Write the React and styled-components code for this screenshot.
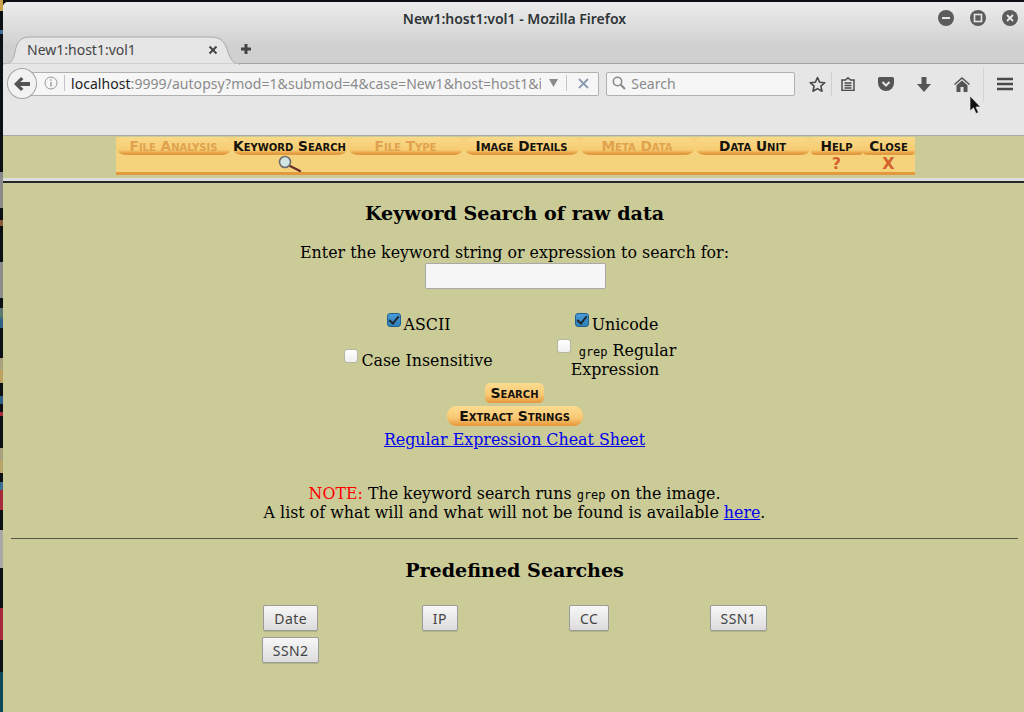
import React from "react"
import styled, { createGlobalStyle } from 'styled-components'

const GlobalStyle = createGlobalStyle`
  html, body {
    margin: 0;
    padding: 0;
    height: 712px;
    overflow: hidden;
    background: #0c0f14;
  }
`

const uiFont = `"Noto Sans", "Open Sans", sans-serif`
const pageFont = `"DejaVu Serif", "Liberation Serif", serif`
const capsFont = `"DejaVu Sans", "Liberation Sans", sans-serif`

const Screen = styled('div')`
  position: relative;
  width: 1024px;
  height: 712px;
  overflow: hidden;
  display: flex;
  background: #0c0f14;
`

// bits of the desktop that peek out left of the window
const DesktopStrip = styled('div')`
  flex: none;
  width: 3px;
  height: 712px;
  background: linear-gradient(to bottom,
    #c9a24a 0 11px, #0c0f14 11px 30px, #3d6f95 30px 34px, #0c0f14 34px 172px,
    #8a8a8a 172px 208px, #0c0f14 208px 220px, #8a5a3a 220px 226px, #0c0f14 226px 262px,
    #8c8c8c 262px 298px, #0c0f14 298px 308px, #5a7a70 308px 316px, #2f5f85 320px 328px,
    #0c0f14 328px 358px, #a9a27e 358px 370px, #bda262 370px 383px, #0c0f14 383px 396px, #2f5f85 396px 404px,
    #0c0f14 404px 412px, #a52a3a 412px 416px, #0c0f14 416px 448px, #a9a27e 448px 460px, #b8a468 460px 473px,
    #0c0f14 473px 482px, #3d6f95 482px 490px, #a52a3a 490px 510px, #0c0f14 510px 530px,
    #a8a8a8 530px 568px, #0c0f14 568px 608px, #a52a3a 608px 640px, #0c0f14 640px 672px,
    #0e4a5a 672px 712px);
`

const Window = styled('div')`
  flex: none;
  width: 1023px;
  margin-top: 2px;
  height: 710px;
  display: flex;
  flex-direction: column;
  background: #cbcb98;
  border-top-left-radius: 5px;
  overflow: hidden;
`

const TitleBar = styled('div')`
  flex: none;
  background: linear-gradient(to bottom, #ececec, #d0d0d0 45px);
  border-bottom: 1px solid #a3a3a3;
`

const TitleRow = styled('div')`
  height: 33px;
  box-sizing: border-box;
  display: grid;
  grid-template-columns: 1fr auto 1fr;
  align-items: center;
  padding: 0 8px 1px;
`

const WindowTitle = styled('div')`
  grid-column: 2;
  font: 600 14px ${uiFont};
  color: #2e3436;
`

const WindowControls = styled('div')`
  grid-column: 3;
  justify-self: end;
  display: flex;
  gap: 16px;
`

const TabRow = styled('div')`
  height: 28px;
  display: flex;
  align-items: center;
`

const Tab = styled('div')`
  position: relative;
  width: 237px;
  height: 28px;
  box-sizing: border-box;
  padding: 0 22px 0 24px;
  margin-bottom: -1px;
  display: flex;
  align-items: center;
  justify-content: space-between;
  font: 14px ${uiFont};
  color: #444;
  z-index: 0;
`

const TabShape = styled('svg')`
  position: absolute;
  left: 0;
  top: 0;
  z-index: -1;
`

const NewTab = styled('svg')`
  margin-left: 1px;
`

const NavBar = styled('div')`
  flex: none;
  height: 72px;
  box-sizing: border-box;
  background: #e6e6e6;
  border-bottom: 1px solid #a9a9a9;
  padding: 8px 0 0 4px;
  display: flex;
  align-items: flex-start;
`

const BackButton = styled('div')`
  position: relative;
  z-index: 1;
  flex: none;
  width: 30px;
  height: 31px;
  margin-top: -4px;
  box-sizing: border-box;
  border: 1px solid #a5a5a5;
  border-radius: 50%;
  background: #f2f2f2;
  display: flex;
  align-items: center;
  justify-content: center;
`

const UrlBar = styled('div')`
  width: 570px;
  height: 24px;
  margin-left: -7px;
  box-sizing: border-box;
  border: 1px solid #b0b0b0;
  border-left: none;
  border-radius: 0 2px 2px 0;
  background: #f6f6f6;
  padding: 0 0 2px 14px;
  display: flex;
  align-items: center;
  font: 14px ${uiFont};
`

const InfoSep = styled('span')`
  flex: none;
  width: 1px;
  height: 16px;
  margin: 0 6px;
  background: #c4c4c4;
`

const UrlText = styled('div')`
  flex: none;
  width: 470px;
  overflow: hidden;
  white-space: nowrap;
  letter-spacing: 0.05px;
  color: #8b8b8b;
  b {
    font-weight: normal;
    color: #222;
  }
`

const UrlArrow = styled('svg')`
  flex: none;
  margin-left: 8px;
`

const UrlSep = styled('span')`
  flex: none;
  width: 1px;
  height: 16px;
  margin: 0 11px 0 8px;
  background: #c4c4c4;
`

const SearchBox = styled('div')`
  width: 189px;
  height: 24px;
  margin-left: 7px;
  box-sizing: border-box;
  border: 1px solid #b0b0b0;
  border-radius: 2px;
  background: #f6f6f6;
  padding: 0 0 2px 5px;
  display: flex;
  align-items: center;
  gap: 5px;
  font: 14px ${uiFont};
  color: #8b8b8b;
`

const ToolSlot = styled('div')`
  flex: none;
  width: ${p => p.$w}px;
  height: 24px;
  margin-left: ${p => p.$ml || 0}px;
  margin-right: ${p => p.$mr || 0}px;
  box-sizing: border-box;
  display: flex;
  align-items: center;
  justify-content: center;
  border-right: ${p => (p.$divided ? '1px solid #cfcfcf' : 'none')};
`

const ToolDivider = styled('div')`
  flex: none;
  width: 1px;
  height: 34px;
  margin: -4px 0 0 2px;
  background: #d4d4d4;
`

const Cursor = styled('svg')`
  position: absolute;
  left: 969px;
  top: 95px;
`

const Frame = styled('div')`
  flex: none;
  height: 40px;
  padding: 1px 0 0 1px;
  display: flex;
  justify-content: center;
`

const MenuBar = styled('div')`
  display: flex;
  height: 38px;
`

const MenuCell = styled('div')`
  width: ${p => p.$w}px;
  height: 38px;
  box-sizing: border-box;
  background: #f5d37d;
  border-bottom: 3px solid #e39a3e;
  display: flex;
  flex-direction: column;
  align-items: center;
`

const MenuPill = styled('div')`
  flex: none;
  width: 100%;
  height: 18px;
  box-sizing: border-box;
  border-radius: ${p => (p.$square ? '4px' : '9px')};
  background: linear-gradient(to bottom, #f9d989, #f7cc72 72%, #e39a3e 92%);
  display: flex;
  align-items: center;
  justify-content: center;
  font: bold 13.7px ${capsFont};
  font-variant: small-caps;
  color: ${p => (p.$off ? '#e0a24e' : '#16120c')};
  white-space: nowrap;
`

const MenuMark = styled('div')`
  flex: 1;
  display: flex;
  align-items: center;
  justify-content: center;
  font: bold 16px ${capsFont};
  line-height: 1;
  color: #d4622c;
`

const FrameRule = styled('div')`
  flex: none;
  height: 6px;
  box-sizing: border-box;
  background: #dcdcdc;
  border-bottom: 2px solid #23262a;
  border-top: 1px solid #cbcb98;
`

const Page = styled('div')`
  flex: 1;
  padding: 0 8px;
  text-align: center;
  font: 15.85px/19px ${pageFont};
  color: #000;
`

const Heading = styled('h3')`
  margin: ${p => p.$top}px 0 ${p => p.$bottom}px;
  font: bold 19.1px/22px ${pageFont};
`

const KeywordInput = styled('input')`
  display: block;
  width: 181px;
  height: 26px;
  box-sizing: border-box;
  margin: 1px auto 0;
  position: relative;
  left: 1px;
  border: 1px solid #a9a9a9;
  border-radius: 2px;
  background: #f6f6f6;
`

const OptionGrid = styled('div')`
  width: 396px;
  margin: 24px auto 0;
  padding-left: 5px;
  display: grid;
  grid-template-columns: 196px 200px;
  justify-items: center;
  align-items: center;
  row-gap: 5px;
`

const Option = styled('label')`
  display: block;
  width: ${p => (p.$narrow ? '135px' : 'auto')};
`

const Tick = styled('input')`
  appearance: none;
  position: relative;
  width: 14px;
  height: 14px;
  margin: 0 3px;
  box-sizing: border-box;
  border: 1px solid #b5b5a5;
  border-radius: 3px;
  background: linear-gradient(to bottom, #fff, #efefef);
  vertical-align: 3px;

  &:checked {
    border-color: #20608f;
    background: linear-gradient(to bottom, #4a9bd8, #2f7fb8);
  }

  &:checked::after {
    content: '';
    position: absolute;
    left: 3.5px;
    top: 0;
    width: 4px;
    height: 8px;
    border: solid #1d2a33;
    border-width: 0 2px 2px 0;
    transform: rotate(40deg);
  }
`

const Code = styled('code')`
  font: 12px "DejaVu Sans Mono", "Liberation Mono", monospace;
`

const ImageButton = styled('div')`
  width: ${p => p.$w}px;
  height: 20px;
  margin: ${p => p.$top}px auto 0;
  border-radius: ${p => p.$r}px;
  background: linear-gradient(to bottom, #fbdc8f, #f9c873 60%, #e5963a);
  display: flex;
  align-items: center;
  justify-content: center;
  font: bold 14px ${capsFont};
  font-variant: small-caps;
  color: #16120c;
`

const CheatLink = styled('a')`
  display: block;
  margin-top: 4px;
  color: #0000ee;
  text-decoration: underline;
`

const Note = styled('p')`
  margin: 35px 0 0;
  a {
    color: #0000ee;
  }
`

const NoteLabel = styled('span')`
  color: #ff0000;
`

const Rule = styled('hr')`
  margin: 16px 0 0;
  border: none;
  border-top: 1px solid #55554a;
`

const SearchGrid = styled('div')`
  width: 597px;
  margin: 0 auto;
  display: grid;
  grid-template-columns: repeat(4, 149.25px);
  justify-items: center;
  row-gap: 6px;
`

const PresetButton = styled('button')`
  height: 26px;
  padding: 0 10px;
  border: 1px solid #9b9b9b;
  border-radius: 2px;
  background: linear-gradient(to bottom, #f7f7f7, #dcdcdc);
  box-shadow: 0 1px 0 rgba(0, 0, 0, 0.12);
  font: 14px ${uiFont};
  letter-spacing: 0.4px;
  color: #444;
`

const CircleIcon = ({ children }) => (
  <svg width="16" height="16" viewBox="0 0 16 16">
    <circle cx="8" cy="8" r="8" fill="#5c5c5c" />
    {children}
  </svg>
)

const Magnifier = () => (
  <svg width="26" height="18" viewBox="0 0 26 18">
    <path d="M11 10 L23 16" stroke="#6b2f2a" strokeWidth="2.4" strokeLinecap="round" />
    <circle cx="8" cy="7" r="5.5" fill="#cfe6e2" stroke="#6d6d6d" strokeWidth="1.6" />
  </svg>
)

const menuItems = [
  { label: 'File Analysis', w: 116, off: true },
  { label: 'Keyword Search', w: 116, mark: <Magnifier /> },
  { label: 'File Type', w: 116, off: true },
  { label: 'Image Details', w: 116 },
  { label: 'Meta Data', w: 115, off: true },
  { label: 'Data Unit', w: 116 },
  { label: 'Help', w: 52, square: true, mark: '?' },
  { label: 'Close', w: 52, square: true, mark: 'X' },
]

const presets = ['Date', 'IP', 'CC', 'SSN1', 'SSN2']

function App() {
  return (
    <Screen>
      <GlobalStyle />
      <DesktopStrip />
      <Window>
        <TitleBar>
          <TitleRow>
            <WindowTitle>New1:host1:vol1 - Mozilla Firefox</WindowTitle>
            <WindowControls>
              <CircleIcon><rect x="4" y="7" width="8" height="2" fill="#e8e8e8" /></CircleIcon>
              <CircleIcon><rect x="4.5" y="4.5" width="7" height="7" fill="none" stroke="#e8e8e8" strokeWidth="1.6" /></CircleIcon>
              <CircleIcon><path d="M5 5 L11 11 M11 5 L5 11" stroke="#e8e8e8" strokeWidth="1.8" /></CircleIcon>
            </WindowControls>
          </TitleRow>
          <TabRow>
            <Tab>
              <TabShape width="237" height="29" viewBox="0 0 237 29">
                <path d="M0 28 C8 28 10 25 12 16 C14 5 18 1 27 1 H208 C218 1 222 6 225 16 C228 25 231 28 237 28 Z" fill="#e6e6e6" stroke="#a8a8a8" />
                <path d="M1 28.5 H236" stroke="#e6e6e6" strokeWidth="1.5" />
              </TabShape>
              <span>New1:host1:vol1</span>
              <svg width="10" height="10" viewBox="0 0 10 10">
                <path d="M1.5 1.5 L8.5 8.5 M8.5 1.5 L1.5 8.5" stroke="#444" strokeWidth="2" />
              </svg>
            </Tab>
            <NewTab width="10" height="10" viewBox="0 0 10 10">
              <path d="M3.5 0 H6.5 V3.5 H10 V6.5 H6.5 V10 H3.5 V6.5 H0 V3.5 H3.5 Z" fill="#444" />
            </NewTab>
          </TabRow>
        </TitleBar>
        <NavBar>
          <BackButton>
            <svg width="16" height="14" viewBox="0 0 16 14">
              <path d="M7 0 L9.5 2.2 L6.2 5 H16 V9 H6.2 L9.5 11.8 L7 14 L0 7 Z" fill="#555" />
            </svg>
          </BackButton>
          <UrlBar>
            <svg width="14" height="14" viewBox="0 0 14 14">
              <circle cx="7" cy="7" r="6" fill="none" stroke="#999" />
              <path d="M7 6 V10.5 M7 3.2 V4.8" stroke="#999" strokeWidth="1.4" />
            </svg>
            <InfoSep />
            <UrlText><b>localhost</b>:9999/autopsy?mod=1&amp;submod=4&amp;case=New1&amp;host=host1&amp;i</UrlText>
            <UrlArrow width="9" height="8" viewBox="0 0 9 8"><path d="M0 0 H9 L4.5 8 Z" fill="#8a8a8a" /></UrlArrow>
            <UrlSep />
            <svg width="11" height="11" viewBox="0 0 11 11">
              <path d="M1 1 L10 10 M10 1 L1 10" stroke="#8a9bb0" strokeWidth="1.8" />
            </svg>
          </UrlBar>
          <SearchBox>
            <svg width="14" height="14" viewBox="0 0 14 14">
              <circle cx="5.5" cy="5.5" r="4.2" fill="none" stroke="#8a8a8a" strokeWidth="1.6" />
              <path d="M8.7 8.7 L13 13" stroke="#8a8a8a" strokeWidth="2" />
            </svg>
            Search
          </SearchBox>
          <ToolSlot $w={28} $ml={9} $divided>
            <svg width="17" height="17" viewBox="0 0 17 17">
              <path d="M8.5 1.5 L10.6 6.2 L15.8 6.7 L11.9 10.1 L13 15.2 L8.5 12.6 L4 15.2 L5.1 10.1 L1.2 6.7 L6.4 6.2 Z" fill="none" stroke="#4a4a4a" strokeWidth="1.6" strokeLinejoin="round" />
            </svg>
          </ToolSlot>
          <ToolSlot $w={32} $mr={3}>
            <svg width="14" height="14" viewBox="0 0 14 14">
              <path d="M1 3 H4.5 L7 0.8 L9.5 3 H13 V13.5 H1 Z" fill="none" stroke="#4a4a4a" strokeWidth="1.5" />
              <path d="M3.5 6 H10.5 M3.5 8.5 H10.5 M3.5 11 H10.5" stroke="#4a4a4a" strokeWidth="1.3" />
            </svg>
          </ToolSlot>
          <ToolSlot $w={38}>
            <svg width="16" height="14" viewBox="0 0 16 14">
              <path d="M1.5 0 H14.5 A1.5 1.5 0 0 1 16 1.5 V6 A8 8 0 0 1 0 6 V1.5 A1.5 1.5 0 0 1 1.5 0 Z" fill="#555" />
              <path d="M4.5 5 L8 8.5 L11.5 5" fill="none" stroke="#e6e6e6" strokeWidth="2" />
            </svg>
          </ToolSlot>
          <ToolSlot $w={38}>
            <svg width="14" height="15" viewBox="0 0 14 15">
              <path d="M4.5 0 H9.5 V7 H14 L7 15 L0 7 H4.5 Z" fill="#555" />
            </svg>
          </ToolSlot>
          <ToolSlot $w={38}>
            <svg width="16" height="15" viewBox="0 0 16 15">
              <path d="M8 0 L16 7 L15 8 L8 2 L1 8 L0 7 Z" fill="#555" />
              <path d="M8 3.5 L13.5 8.2 V15 H9.5 V10 H6.5 V15 H2.5 V8.2 Z" fill="#555" />
            </svg>
          </ToolSlot>
          <ToolDivider />
          <ToolSlot $w={42}>
            <svg width="16" height="14" viewBox="0 0 16 14">
              <path d="M0 2 H16 M0 7 H16 M0 12 H16" stroke="#4a4a4a" strokeWidth="2.4" />
            </svg>
          </ToolSlot>
        </NavBar>
        <Frame>
          <MenuBar>
            {menuItems.map(item => (
              <MenuCell key={item.label} $w={item.w}>
                <MenuPill $off={item.off} $square={item.square}>{item.label}</MenuPill>
                <MenuMark>{item.mark}</MenuMark>
              </MenuCell>
            ))}
          </MenuBar>
        </Frame>
        <FrameRule />
        <Page>
          <Heading $top={20} $bottom={18}>Keyword Search of raw data</Heading>
          <div>Enter the keyword string or expression to search for:</div>
          <KeywordInput type="text" />
          <OptionGrid>
            <Option><Tick type="checkbox" defaultChecked />ASCII</Option>
            <Option><Tick type="checkbox" defaultChecked />Unicode</Option>
            <Option><Tick type="checkbox" />Case Insensitive</Option>
            <Option $narrow><Tick type="checkbox" /> <Code>grep</Code> Regular Expression</Option>
          </OptionGrid>
          <ImageButton $w={59} $r={5} $top={4}>Search</ImageButton>
          <ImageButton $w={136} $r={9} $top={3}>Extract Strings</ImageButton>
          <CheatLink href="#">Regular Expression Cheat Sheet</CheatLink>
          <Note>
            <NoteLabel>NOTE:</NoteLabel> The keyword search runs <Code>grep</Code> on the image.<br />
            A list of what will and what will not be found is available <a href="#">here</a>.
          </Note>
          <Rule />
          <Heading $top={21} $bottom={23}>Predefined Searches</Heading>
          <SearchGrid>
            {presets.map(name => (
              <PresetButton key={name}>{name}</PresetButton>
            ))}
          </SearchGrid>
        </Page>
      </Window>
      <Cursor width="13" height="20" viewBox="0 0 13 20">
        <path d="M1 1 V16 L4.5 12.8 L7 18.5 L9.5 17.5 L7 12 H11.5 Z" fill="#111" stroke="#e8e8e8" strokeWidth="0.7" />
      </Cursor>
    </Screen>
  )
}

export default App
